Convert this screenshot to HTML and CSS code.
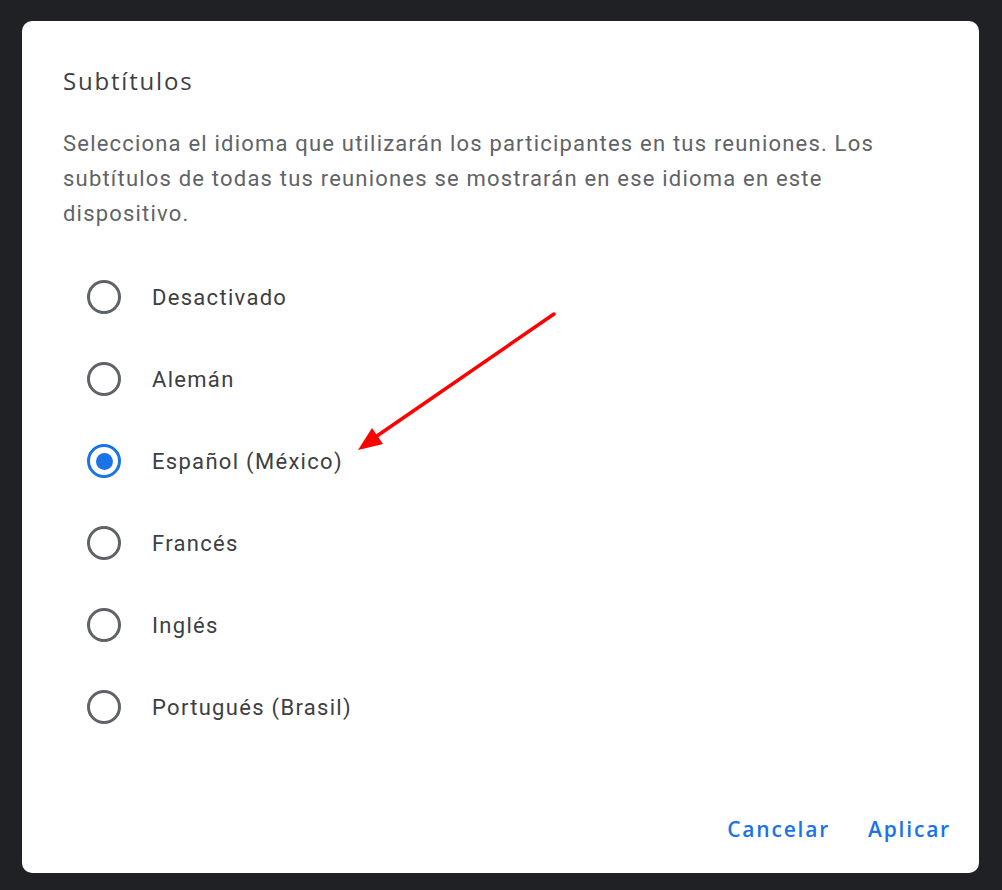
FILE: index.html
```html
<!DOCTYPE html>
<html lang="es">
<head>
<meta charset="utf-8">
<title>Subtítulos</title>
<link rel="stylesheet" href="styles.css">
</head>
<body>
<div class="dialog">
  <h1 class="title">Subtítulos</h1>
  <p class="desc">Selecciona el idioma que utilizarán los participantes en tus reuniones. Los subtítulos de todas tus reuniones se mostrarán en ese idioma en este dispositivo.</p>
  <ul class="options">
    <li class="option"><span class="radio"></span><span class="label">Desactivado</span></li>
    <li class="option"><span class="radio"></span><span class="label">Alemán</span></li>
    <li class="option"><span class="radio checked"></span><span class="label">Español (México)</span></li>
    <li class="option"><span class="radio"></span><span class="label">Francés</span></li>
    <li class="option"><span class="radio"></span><span class="label">Inglés</span></li>
    <li class="option"><span class="radio"></span><span class="label">Portugués (Brasil)</span></li>
  </ul>
  <div class="actions">
    <button class="btn">Cancelar</button>
    <button class="btn">Aplicar</button>
  </div>
  <svg class="arrow" width="220" height="160" viewBox="0 0 220 160">
    <line x1="200" y1="10" x2="20" y2="134" stroke="#ff0000" stroke-width="3.5" stroke-linecap="round"/>
    <polygon points="4,146 18,124 29,140" fill="#ff0000"/>
  </svg>
</div>
</body>
</html>
```
FILE: styles.css
```css
html, body {
  margin: 0;
  padding: 0;
  background: #202124;
}
body {
  width: 1002px;
  height: 890px;
  padding: 21px 23px 17px 22px;
  box-sizing: border-box;
}
.dialog {
  position: relative;
  background: #fff;
  border-radius: 10px;
  height: 852px;
  box-sizing: border-box;
  padding: 0 28px 0 41px;
  display: flex;
  flex-direction: column;
  font-family: Roboto, "Liberation Sans", sans-serif;
}
.title {
  margin: 0;
  padding-top: 44px;
  font-family: "Open Sans", Roboto, sans-serif;
  font-weight: 400;
  font-size: 24px;
  line-height: 32px;
  color: #3c4043;
  letter-spacing: 1.8px;
}
.desc {
  margin: 29px 0 0;
  font-size: 22px;
  line-height: 35px;
  color: #5f6368;
  letter-spacing: 1.2px;
}
.options {
  list-style: none;
  margin: 25px 0 0;
  padding: 0;
}
.option {
  height: 82px;
  display: flex;
  align-items: center;
}
.radio {
  width: 34px;
  height: 34px;
  box-sizing: border-box;
  border: 3px solid #5f6368;
  border-radius: 50%;
  margin-left: 24px;
  margin-right: 31px;
  display: flex;
  align-items: center;
  justify-content: center;
}
.radio.checked {
  border-color: #1a73e8;
}
.radio.checked::after {
  content: "";
  width: 17px;
  height: 17px;
  border-radius: 50%;
  background: #1a73e8;
}
.label {
  font-size: 22px;
  color: #3c4043;
  letter-spacing: 1.3px;
}
.actions {
  margin-top: auto;
  padding-bottom: 29px;
  display: flex;
  justify-content: flex-end;
  gap: 38px;
}
.btn {
  background: none;
  border: none;
  padding: 0;
  font-family: "Open Sans", Roboto, sans-serif;
  font-weight: 600;
  font-size: 21px;
  line-height: 30px;
  color: #1a73e8;
  letter-spacing: 1.8px;
}
.arrow {
  position: absolute;
  left: 332px;
  top: 283px;
}
```
